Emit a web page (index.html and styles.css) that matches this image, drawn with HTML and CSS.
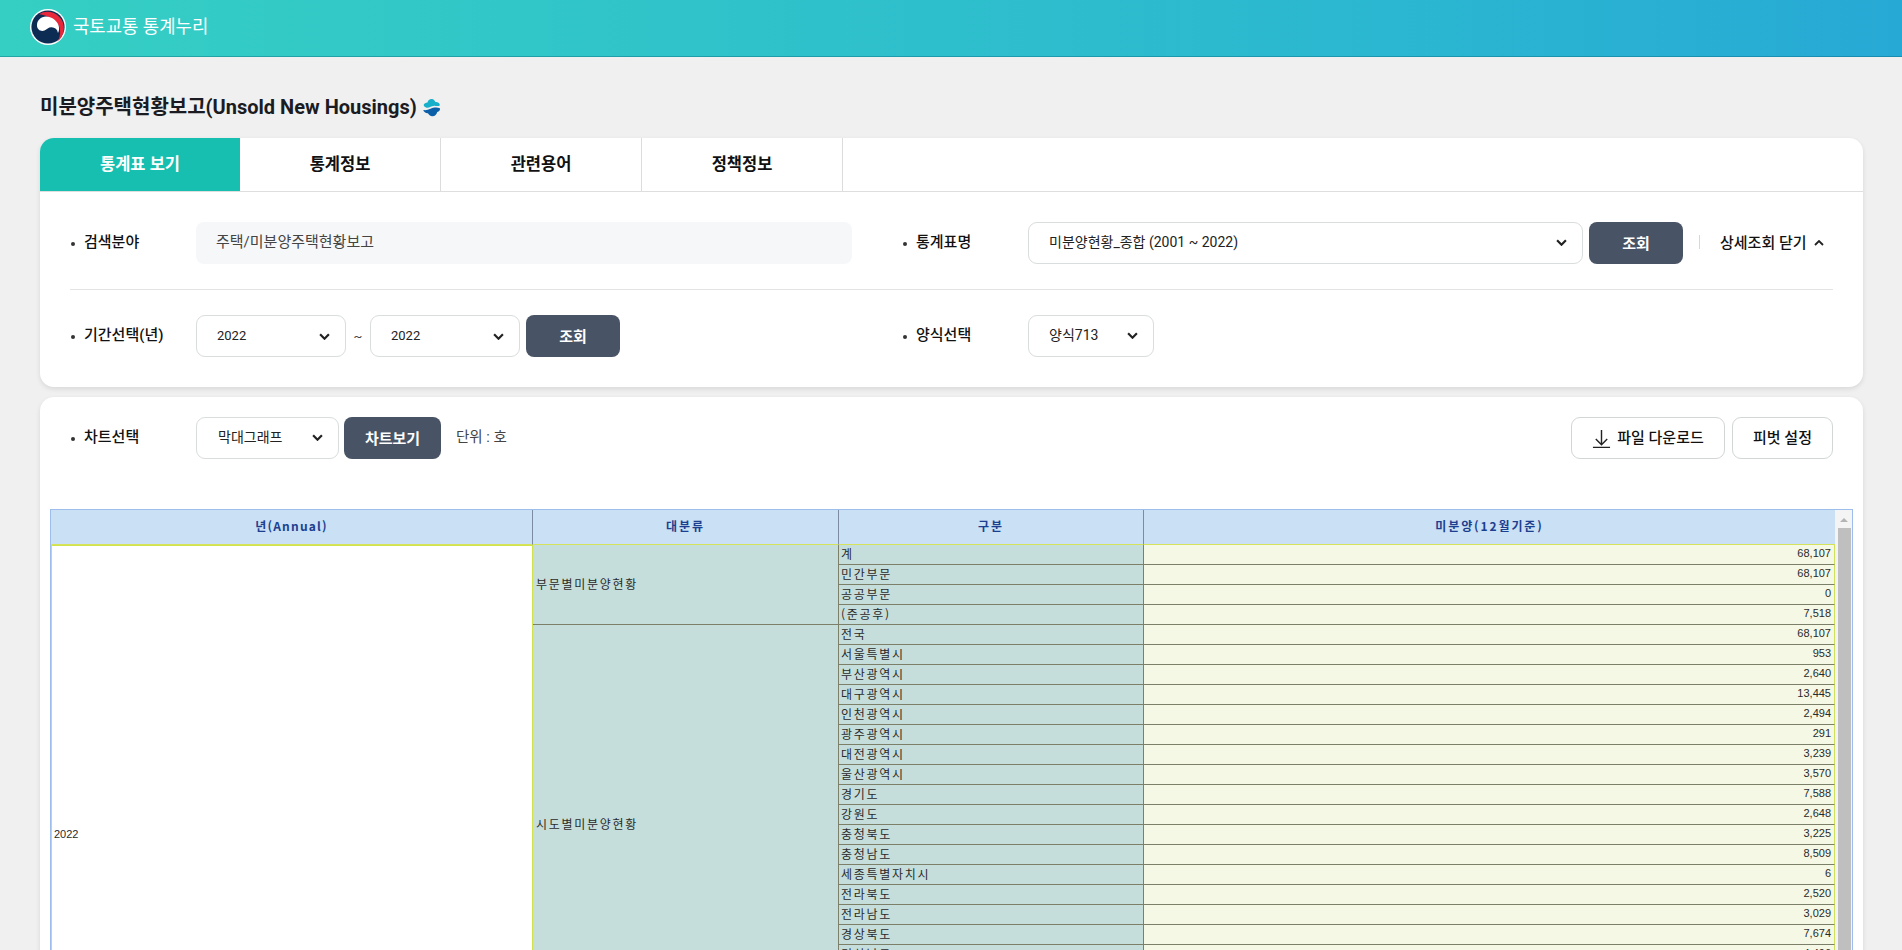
FILE: index.html
```html
<!DOCTYPE html>
<html lang="ko">
<head>
<meta charset="utf-8">
<title>국토교통 통계누리</title>
<link rel="stylesheet" href="styles.css">
</head>
<body>
<header class="topbar">
  <svg class="logo" viewBox="0 0 36 36" aria-hidden="true">
    <circle cx="18" cy="18" r="18" fill="#fff"/>
    <circle cx="18" cy="18" r="16.600" fill="#0d2c54"/>
    <path d="M9 5.200C15 1.200 24 2 29.600 8.200C34.600 13.600 35 21 32 27C31 29 29.600 30.800 28 32C31 26 31 19 27 14C22 8 14 6 9 5.200Z" fill="#e8283a"/>
    <path d="M7 17C6.600 11.500 11 7.600 16 7.600C21.500 7.600 27 11.500 28.600 16.500C29.400 19 29.200 22 28 24C27.400 20.500 25 18.500 21.600 18.300C18.400 18.200 17 20.400 14.500 21.500C11 22.800 7.300 20.800 7 17Z" fill="#fff"/>
  </svg>
  <span class="brand">국토교통 통계누리</span>
</header>
<main class="page">
  <h1 class="title"><span class="title-text">미분양주택현황보고(Unsold New Housings)</span>
    <svg class="title-icon" viewBox="0 0 18 18" aria-hidden="true">
      <path d="M1.600 6.600C1.800 4.800 3.600 4.600 5.200 4.200C5.600 2.200 7.400 0.800 9.400 1C11 1.200 12 2.400 12.800 3.800C14.800 3.600 16.600 4.800 17 6.800C15.200 8.400 13 7.200 11.400 7.400C8.800 7.800 6.800 9.600 4.400 9.200C3 8.800 1.800 7.800 1.600 6.600Z" fill="#17afc9"/>
      <path d="M1.200 11.400C3.400 11.800 5.800 11.400 8 10.200C10.400 9 13.800 8.400 17 9.600C17.400 11.400 16.200 12.800 14.400 13.200C13.800 15.400 12.400 17.200 9.800 17.200C7.800 17.200 6.400 15.800 5.600 14.400C3.800 14.600 1.600 13.400 1.200 11.400Z" fill="#0b5fa9"/>
    </svg>
  </h1>

  <section class="card">
    <nav class="tabs">
      <a class="tab tab-active">통계표 보기</a>
      <a class="tab">통계정보</a>
      <a class="tab">관련용어</a>
      <a class="tab">정책정보</a>
    </nav>
    <div class="filters">
      <div class="filter-row filter-row-first">
        <div class="filter">
          <span class="label">검색분야</span>
          <div class="readonly">주택/미분양주택현황보고</div>
        </div>
        <div class="filter">
          <span class="label">통계표명</span>
          <div class="select select-name">미분양현황_종합 (2001 ~ 2022)
            <svg class="chev" viewBox="0 0 10 6"><path d="M1 1l4 4 4-4"/></svg>
          </div>
          <button class="btn btn-query">조회</button>
          <span class="detail-toggle">상세조회 닫기
            <svg class="chev-small" viewBox="0 0 10 6"><path d="M1 5l4-4 4 4"/></svg>
          </span>
        </div>
      </div>
      <div class="filter-row">
        <div class="filter">
          <span class="label">기간선택(년)</span>
          <div class="select select-year">2022
            <svg class="chev" viewBox="0 0 10 6"><path d="M1 1l4 4 4-4"/></svg>
          </div>
          <span class="tilde">~</span>
          <div class="select select-year">2022
            <svg class="chev" viewBox="0 0 10 6"><path d="M1 1l4 4 4-4"/></svg>
          </div>
          <button class="btn btn-query">조회</button>
        </div>
        <div class="filter">
          <span class="label">양식선택</span>
          <div class="select select-form">양식713
            <svg class="chev" viewBox="0 0 10 6"><path d="M1 1l4 4 4-4"/></svg>
          </div>
        </div>
      </div>
    </div>
  </section>

  <section class="card card-data">
    <div class="toolbar">
      <div class="filter">
        <span class="label">차트선택</span>
        <div class="select select-chart">막대그래프
          <svg class="chev" viewBox="0 0 10 6"><path d="M1 1l4 4 4-4"/></svg>
        </div>
        <button class="btn btn-chart">차트보기</button>
        <span class="unit">단위 : 호</span>
      </div>
      <div class="actions">
        <button class="btn-line btn-download">
          <svg class="dl-icon" viewBox="0 0 20 20"><path d="M10 1v15M4 10.500l6 6 6-6M1 19.500h18"/></svg>
          파일 다운로드
        </button>
        <button class="btn-line btn-pivot">피벗 설정</button>
      </div>
    </div>

    <div class="grid-box">
      <table class="grid">
        <colgroup>
          <col class="c1"><col class="c2"><col class="c3"><col class="c4">
        </colgroup>
        <thead>
          <tr><th class="th-annual">년(Annual)</th><th>대분류</th><th>구분</th><th>미분양(12월기준)</th></tr>
        </thead>
        <tbody>
          <tr><td class="year" rowspan="29">2022</td><td class="group" rowspan="4">부문별미분양현황</td><td class="name">계</td><td class="num">68,107</td></tr>
          <tr><td class="name">민간부문</td><td class="num">68,107</td></tr>
          <tr><td class="name">공공부문</td><td class="num">0</td></tr>
          <tr><td class="name">(준공후)</td><td class="num">7,518</td></tr>
          <tr><td class="group" rowspan="20">시도별미분양현황</td><td class="name">전국</td><td class="num">68,107</td></tr>
          <tr><td class="name">서울특별시</td><td class="num">953</td></tr>
          <tr><td class="name">부산광역시</td><td class="num">2,640</td></tr>
          <tr><td class="name">대구광역시</td><td class="num">13,445</td></tr>
          <tr><td class="name">인천광역시</td><td class="num">2,494</td></tr>
          <tr><td class="name">광주광역시</td><td class="num">291</td></tr>
          <tr><td class="name">대전광역시</td><td class="num">3,239</td></tr>
          <tr><td class="name">울산광역시</td><td class="num">3,570</td></tr>
          <tr><td class="name">경기도</td><td class="num">7,588</td></tr>
          <tr><td class="name">강원도</td><td class="num">2,648</td></tr>
          <tr><td class="name">충청북도</td><td class="num">3,225</td></tr>
          <tr><td class="name">충청남도</td><td class="num">8,509</td></tr>
          <tr><td class="name">세종특별자치시</td><td class="num">6</td></tr>
          <tr><td class="name">전라북도</td><td class="num">2,520</td></tr>
          <tr><td class="name">전라남도</td><td class="num">3,029</td></tr>
          <tr><td class="name">경상북도</td><td class="num">7,674</td></tr>
          <tr><td class="name">경상남도</td><td class="num">4,496</td></tr>
          <tr><td class="name"></td><td class="num"></td></tr>
          <tr><td class="name"></td><td class="num"></td></tr>
          <tr><td class="name"></td><td class="num"></td></tr>
          <tr><td class="group" rowspan="5"></td><td class="name"></td><td class="num"></td></tr>
          <tr><td class="name"></td><td class="num"></td></tr>
          <tr><td class="name"></td><td class="num"></td></tr>
          <tr><td class="name"></td><td class="num"></td></tr>
          <tr><td class="name"></td><td class="num"></td></tr>
        </tbody>
      </table>
      <div class="scrollbar">
        <span class="scroll-up"></span>
        <span class="scroll-thumb"></span>
      </div>
    </div>
  </section>
</main>
</body>
</html>
```

FILE: styles.css
```css
* { box-sizing: border-box; }

html, body {
  margin: 0;
  height: 950px;
  overflow: hidden;
}

body {
  background: #f0f0f0;
  color: #111;
  font-family: Roboto, "Noto Sans CJK KR", sans-serif;
}

.topbar {
  display: flex;
  align-items: center;
  gap: 7px;
  height: 57px;
  padding: 0 0 2px 30px;
  background: linear-gradient(90deg, #35cfc3 0%, #2bb8d0 70%, #27a9d5 100%);
  border-bottom: 1px solid rgba(0, 90, 110, 0.35);
}

.logo { width: 36px; height: 36px; flex: none; }

.brand {
  padding-bottom: 4px;
  color: #fff;
  font-size: 17.8px;
  font-weight: 400;
}

.page { padding: 0 39px 0 40px; }

.title {
  display: flex;
  align-items: center;
  gap: 5px;
  height: 28px;
  margin: 36px 0 17px;
  font-size: 20px;
  font-weight: 700;
  color: #1b1b22;
}

.title-text { padding-bottom: 4px; }

.title-icon { width: 19px; height: 19px; flex: none; }

.card {
  background: #fff;
  border-radius: 14px;
  box-shadow: 0 2px 5px rgba(0, 0, 0, 0.1);
}

.tabs {
  display: flex;
  height: 54px;
  border-bottom: 1px solid #dedede;
}

.tab {
  display: flex;
  align-items: center;
  justify-content: center;
  width: 201px;
  padding-bottom: 3px;
  border-right: 1px solid #dcdcdc;
  font-size: 16.5px;
  font-weight: 700;
  color: #111;
}

.tab-active {
  width: 200px;
  height: 53px;
  border-right: 0;
  border-radius: 14px 0 0 0;
  background: #17bfb1;
  color: #fff;
}

.filters { padding: 0 30px; }

.filter-row {
  display: grid;
  grid-template-columns: 832px 1fr;
  height: 97px;
  padding: 25px 0 0;
}

.filter-row-first {
  height: 98px;
  padding-top: 30px;
  border-bottom: 1px solid #e2e4e6;
}

.filter {
  display: flex;
  align-items: center;
  height: 42px;
}

.label {
  position: relative;
  flex: none;
  width: 126px;
  padding: 0 0 6px 14px;
  font-size: 15px;
  font-weight: 500;
  color: #111;
}

.label::before {
  content: "";
  position: absolute;
  left: 1px;
  top: 50%;
  width: 4px;
  height: 4px;
  margin-top: -1px;
  border-radius: 50%;
  background: #333;
}

.readonly {
  display: flex;
  align-items: center;
  width: 656px;
  height: 42px;
  padding: 0 0 6px 20px;
  border-radius: 8px;
  background: #f6f7f9;
  font-size: 15px;
  color: #444;
}

.select {
  display: flex;
  align-items: center;
  justify-content: space-between;
  height: 42px;
  padding: 0 15px 4px 20px;
  border: 1px solid #d9dddd;
  border-radius: 9px;
  background: #fff;
  font-size: 14px;
  color: #222;
}

.select-year { width: 150px; padding-bottom: 2px; font-size: 13px; }
.select-name { width: 555px; }
.select-form { width: 126px; }
.select-chart { width: 143px; padding-left: 21px; }

.chev {
  flex: none;
  width: 11px;
  height: 7px;
  margin-top: 3px;
  fill: none;
  stroke: #222;
  stroke-width: 2;
}

.select-year .chev { margin-top: 2px; }

.tilde {
  width: 24px;
  text-align: center;
  font-size: 13px;
  color: #444;
}

.btn {
  height: 42px;
  margin-left: 6px;
  padding-bottom: 3px;
  border: 0;
  border-radius: 8px;
  background: #485466;
  color: #fff;
  font: 700 15px Roboto, "Noto Sans CJK KR", sans-serif;
}

.btn-query { width: 94px; }
.btn-chart { width: 97px; margin-left: 5px; }

.detail-toggle {
  position: relative;
  display: flex;
  align-items: center;
  gap: 7px;
  margin-left: 17px;
  padding: 0 0 3px 20px;
  font-size: 15px;
  font-weight: 500;
  color: #111;
}

.detail-toggle::before {
  content: "";
  position: absolute;
  left: -1px;
  top: 4px;
  width: 1px;
  height: 14px;
  background: #d8d8d8;
}

.chev-small {
  width: 10px;
  height: 6px;
  margin-top: 3px;
  fill: none;
  stroke: #222;
  stroke-width: 1.8;
}

.unit {
  margin-left: 15px;
  padding-bottom: 6px;
  font-size: 14.5px;
  color: #444;
}

.card-data {
  margin-top: 10px;
  padding: 20px 10px 0;
  border-radius: 14px 14px 0 0;
  height: 700px;
}

.toolbar {
  display: flex;
  justify-content: space-between;
  height: 42px;
  padding: 0 20px;
  margin-bottom: 50px;
}

.actions { display: flex; gap: 7px; }

.btn-line {
  display: flex;
  align-items: center;
  justify-content: center;
  height: 42px;
  padding-bottom: 5px;
  border: 1px solid #d2d6d6;
  border-radius: 9px;
  background: #fff;
  color: #111;
  font: 500 15px Roboto, "Noto Sans CJK KR", sans-serif;
}

.btn-download { width: 154px; gap: 6px; }
.btn-pivot { width: 101px; }

.dl-icon {
  width: 19px;
  height: 19px;
  margin-top: 5px;
  fill: none;
  stroke: #222;
  stroke-width: 1.5;
}

.grid-box {
  display: flex;
  align-items: stretch;
  height: 640px;
  border: 1px solid #9dbdea;
  overflow: hidden;
}

.grid {
  align-self: flex-start;
  width: 1784px;
  flex: none;
  table-layout: fixed;
  border-collapse: separate;
  border-spacing: 0;
  font-family: "Noto Sans CJK KR", sans-serif;
  font-size: 12px;
  color: #2a2a2a;
}

.c1 { width: 482px; }
.c2 { width: 306px; }
.c3 { width: 305px; }
.c4 { width: 691px; }

.grid th {
  height: 35px;
  padding: 0 0 3px;
  border-right: 1px solid #7c8ba3;
  border-bottom: 1px solid #d4e35a;
  background: #c9e0f5;
  color: #1d3f8f;
  font-size: 12px;
  font-weight: 700;
  letter-spacing: 1.9px;
}

.grid .th-annual { letter-spacing: 1.2px; }
.grid th:last-child { border-right: 0; }

.grid td {
  height: 20px;
  padding: 0 3px 3px 2px;
  border-right: 1px solid #7d8068;
  border-bottom: 1px solid #7d8068;
  line-height: 15px;
  letter-spacing: 1.7px;
  white-space: nowrap;
  overflow: hidden;
}

.grid .year {
  padding: 0 2px 2px;
  border-left: 1px solid #d2e24c;
  border-right: 1px solid #d2e24c;
  border-bottom: 1px solid #d2e24c;
  border-top: 1px solid #d2e24c;
  background: #fff;
  font-family: "Liberation Sans", sans-serif;
  font-size: 11px;
  letter-spacing: 0;
}

.grid .group,
.grid .name { background: #c5dedb; }

.grid .group { padding-left: 3px; }

.grid .num {
  padding: 0 3px 2px 0;
  border-right: 1px solid #cfe05a;
  background: #f5f8e4;
  text-align: right;
  font-family: "Liberation Sans", sans-serif;
  font-size: 11px;
  letter-spacing: 0;
}

.scrollbar {
  flex: 1;
  display: flex;
  flex-direction: column;
  align-items: center;
  padding-left: 1px;
  background: #f4f4f4;
}

.scroll-up {
  width: 0;
  height: 0;
  margin-top: 8px;
  margin-bottom: 6px;
  border-left: 4px solid transparent;
  border-right: 4px solid transparent;
  border-bottom: 4px solid #b4b4b4;
}

.scroll-thumb {
  flex: 1;
  width: 13px;
  background: #bfbfbf;
}
```
